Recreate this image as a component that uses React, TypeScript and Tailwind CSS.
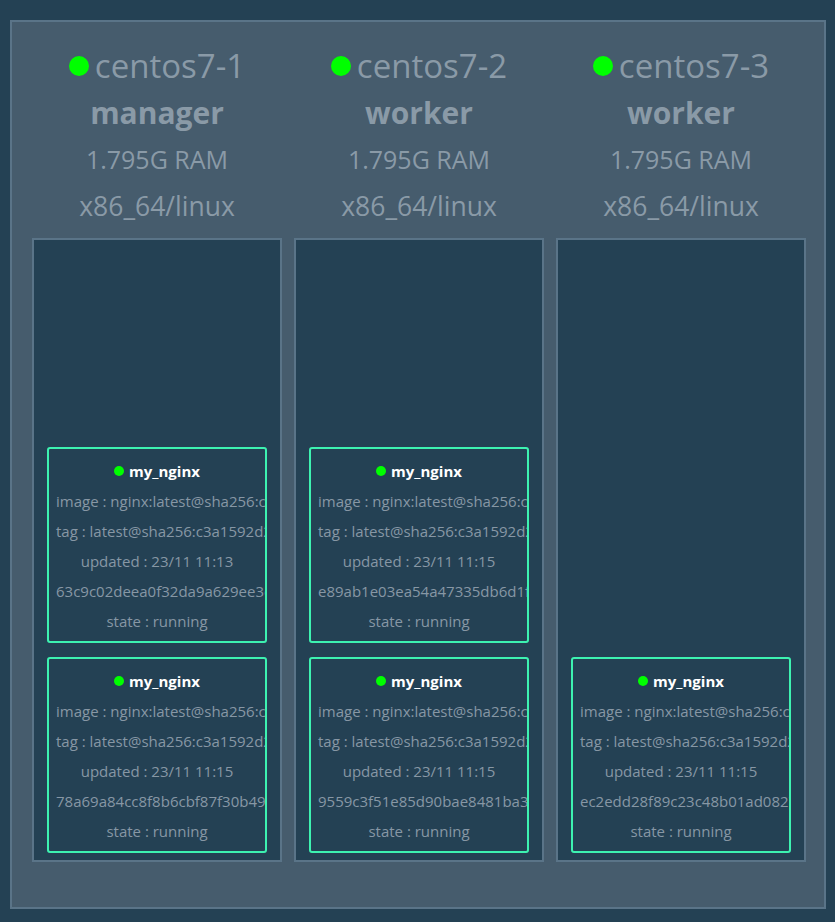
const nodes = [
  {
    name: "centos7-1",
    role: "manager",
    tasks: [
      { updated: "23/11 11:13", id: "63c9c02deea0f32da9a629ee3e1b" },
      { updated: "23/11 11:15", id: "78a69a84cc8f8b6cbf87f30b49a1" },
    ],
  },
  {
    name: "centos7-2",
    role: "worker",
    tasks: [
      { updated: "23/11 11:15", id: "e89ab1e03ea54a47335db6d1f2c" },
      { updated: "23/11 11:15", id: "9559c3f51e85d90bae8481ba3c2" },
    ],
  },
  {
    name: "centos7-3",
    role: "worker",
    tasks: [{ updated: "23/11 11:15", id: "ec2edd28f89c23c48b01ad0827d" }],
  },
];

function Task({ updated, id }: { updated: string; id: string }) {
  const lines = [
    "image : nginx:latest@sha256:c3a1592d2b6d275",
    "tag : latest@sha256:c3a1592d2b6d275bef4087",
    `updated : ${updated}`,
    id,
    "state : running",
  ];
  return (
    <div className="mx-[13px] overflow-hidden rounded-[3px] border-2 border-[#3df2b1] px-[7px] pt-[7px] pb-[5px] text-center">
      <div className="flex h-[30px] items-center justify-center gap-[5px] text-[15px] font-bold text-white">
        <span className="h-[10px] w-[10px] rounded-full bg-[#00ff00]" />
        my_nginx
      </div>
      {lines.map((l) => (
        <div
          key={l}
          className="h-[30px] whitespace-nowrap text-[15px] leading-[30px] text-[#8797a5]"
        >
          {l}
        </div>
      ))}
    </div>
  );
}

export default function App() {
  return (
    <div
      className="min-h-[922px] bg-[#244154] pt-[20px] pl-[10px]"
      style={{ fontFamily: '"Open Sans", sans-serif' }}
    >
      <div className="w-[816px] border-2 border-[#5a7488] bg-[#465c6d] pt-[20px] pr-[18px] pb-[45px] pl-[20px]">
        <div className="grid grid-cols-3 gap-x-[12px]">
          {nodes.map((n) => (
            <div key={n.name} className="flex flex-col">
              <div className="text-center text-[#8a9aa7]">
                <div className="flex h-[47px] items-center justify-center gap-[6px] text-[33px]">
                  <span className="h-[20px] w-[20px] rounded-full bg-[#00ff00]" />
                  {n.name}
                </div>
                <div className="h-[47px] text-[30px] leading-[47px] font-bold">{n.role}</div>
                <div className="h-[47px] text-[25px] leading-[47px]">1.795G RAM</div>
                <div className="h-[47px] text-[26.5px] leading-[47px]">x86_64/linux</div>
              </div>
              <div className="mt-[8px] flex h-[624px] flex-col justify-end gap-[14px] border-2 border-[#5a7488] bg-[#244154] pb-[7px]">
                {n.tasks.map((t) => (
                  <Task key={t.id} {...t} />
                ))}
              </div>
            </div>
          ))}
        </div>
      </div>
    </div>
  );
}
